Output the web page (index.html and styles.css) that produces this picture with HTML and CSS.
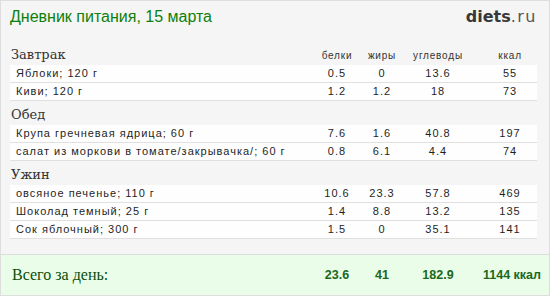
FILE: index.html
```html
<!DOCTYPE html>
<html lang="ru">
<head>
<meta charset="utf-8">
<title>Дневник питания</title>
<link rel="stylesheet" href="styles.css">
</head>
<body>
<div class="diary">
  <div class="content">
    <header class="top">
      <h1 class="title">Дневник питания, 15 марта</h1>
      <div class="logo"><span class="logo-main">diets</span><span class="logo-tld">.ru</span></div>
    </header>

    <section class="meal">
      <div class="grid meal-head">
        <h2 class="meal-name">Завтрак</h2>
        <span class="label">белки</span>
        <span class="label">жиры</span>
        <span class="label">углеводы</span>
        <span class="label kcal">ккал</span>
      </div>
      <div class="grid item"><span class="food">Яблоки; 120 г</span><span class="num">0.5</span><span class="num">0</span><span class="num">13.6</span><span class="num kcal">55</span></div>
      <div class="grid item"><span class="food">Киви; 120 г</span><span class="num">1.2</span><span class="num">1.2</span><span class="num">18</span><span class="num kcal">73</span></div>
    </section>

    <section class="meal">
      <div class="grid meal-head">
        <h2 class="meal-name">Обед</h2>
      </div>
      <div class="grid item"><span class="food">Крупа гречневая ядрица; 60 г</span><span class="num">7.6</span><span class="num">1.6</span><span class="num">40.8</span><span class="num kcal">197</span></div>
      <div class="grid item"><span class="food">салат из моркови в томате/закрывачка/; 60 г</span><span class="num">0.8</span><span class="num">6.1</span><span class="num">4.4</span><span class="num kcal">74</span></div>
    </section>

    <section class="meal">
      <div class="grid meal-head">
        <h2 class="meal-name">Ужин</h2>
      </div>
      <div class="grid item"><span class="food">овсяное печенье; 110 г</span><span class="num">10.6</span><span class="num">23.3</span><span class="num">57.8</span><span class="num kcal">469</span></div>
      <div class="grid item"><span class="food">Шоколад темный; 25 г</span><span class="num">1.4</span><span class="num">8.8</span><span class="num">13.2</span><span class="num kcal">135</span></div>
      <div class="grid item"><span class="food">Сок яблочный; 300 г</span><span class="num">1.5</span><span class="num">0</span><span class="num">35.1</span><span class="num kcal">141</span></div>
    </section>
  </div>

  <footer class="grid total">
    <span class="total-label">Всего за день:</span>
    <span class="total-num">23.6</span>
    <span class="total-num">41</span>
    <span class="total-num">182.9</span>
    <span class="total-num kcal">1144 ккал</span>
  </footer>
</div>
</body>
</html>
```

FILE: styles.css
```css
html, body {
  margin: 0;
  padding: 0;
  background: #ffffff;
}

.diary {
  box-sizing: border-box;
  width: 550px;
  height: 296px;
  border: 1px solid #dedede;
  background: #f5f5f5;
  display: flex;
  flex-direction: column;
}

.content {
  padding: 7px 12px 0 9px;
  flex: 1;
}

.top {
  display: flex;
  justify-content: space-between;
  align-items: baseline;
  height: 18px;
  margin-bottom: 15px;
}

.title {
  margin: 0;
  font: normal 16px/18px "Liberation Sans", Arial, sans-serif;
  color: #0c800c;
}

.logo {
  line-height: 18px;
  white-space: nowrap;
}

.logo-main {
  font: bold 16px/18px "DejaVu Sans", Verdana, sans-serif;
  color: #383838;
}

.logo-tld {
  font: normal 16px/18px "DejaVu Sans", Verdana, sans-serif;
  color: #555555;
  letter-spacing: 1.5px;
}

.grid {
  display: grid;
  grid-template-columns: 1fr 48px 42px 70px 64px;
}

.meal-head {
  height: 24px;
  box-sizing: border-box;
  padding-top: 4px;
  align-items: baseline;
}

.meal-name {
  margin: 0;
  padding-left: 1px;
  font: normal 13px/20px "DejaVu Serif", Georgia, serif;
  color: #333333;
}

.label {
  text-align: center;
  font: normal 10px/20px "Liberation Sans", Arial, sans-serif;
  letter-spacing: 0.8px;
  color: #333333;
}

.kcal {
  padding-left: 10px;
}

.item {
  height: 17px;
  background: #fefefe;
  border-bottom: 1px solid #e0e0e0;
  font: normal 11px/17px "Liberation Sans", Arial, sans-serif;
  letter-spacing: 1px;
  color: #1e1e1e;
}

.food {
  padding-left: 6px;
  white-space: nowrap;
}

.num {
  text-align: center;
}

.kcal.num {
  padding-left: 10px;
}

.total {
  height: 40px;
  border-top: 1px solid #dcdcdc;
  background: #e9fde9;
  padding: 0 12px 0 9px;
  align-items: center;
}

.total-label {
  padding-left: 2px;
  font: normal 16px/40px "Liberation Serif", "Times New Roman", serif;
  color: #0b4d0b;
}

.total-num {
  text-align: center;
  font: bold 12.5px/40px "Liberation Sans", Arial, sans-serif;
  color: #1b671b;
  white-space: nowrap;
}
```
